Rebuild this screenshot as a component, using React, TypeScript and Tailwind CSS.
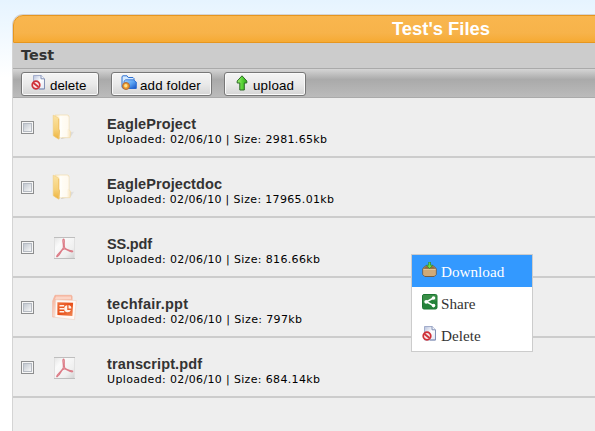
import React from "react";

type Kind = "folder" | "pdf" | "ppt";
type FileEntry = { name: string; size: string; kind: Kind; nameWidth: string; metaWidth: string };

const files: FileEntry[] = [
  { name: "EagleProject", size: "2981.65kb", kind: "folder", nameWidth: "89", metaWidth: "220" },
  { name: "EagleProjectdoc", size: "17965.01kb", kind: "folder", nameWidth: "115", metaWidth: "227" },
  { name: "SS.pdf", size: "816.66kb", kind: "pdf", nameWidth: "45", metaWidth: "213" },
  { name: "techfair.ppt", size: "797kb", kind: "ppt", nameWidth: "81", metaWidth: "195" },
  { name: "transcript.pdf", size: "684.14kb", kind: "pdf", nameWidth: "95", metaWidth: "213" },
];

function DeleteIcon() {
  return (
    <svg width="16" height="16" viewBox="0 0 16 16" className="shrink-0">
      <defs>
        <linearGradient id="page" x1="0" y1="0" x2="1" y2="1">
          <stop offset="0" stopColor="#b4bfdc" />
          <stop offset=".5" stopColor="#fff" />
          <stop offset="1" stopColor="#dfe4f2" />
        </linearGradient>
      </defs>
      <path d="M2.5.5h7.7l3.3 3.3v10.2h-11z" fill="url(#page)" stroke="#a3adcb" />
      <path d="M10 .5v3.3h3.5" fill="#f2f4fb" stroke="#8290b5" />
      <path d="M13.5 4v10H8" fill="none" stroke="#8290b5" />
      <circle cx="5" cy="10" r="3.8" fill="#f8e6e8" stroke="#cf3038" strokeWidth="1.7" />
      <path d="M2.5 8l5 4" stroke="#cf3038" strokeWidth="1.9" />
    </svg>
  );
}

function AddFolderIcon() {
  return (
    <svg width="16" height="16" viewBox="0 0 16 16" className="shrink-0">
      <defs>
        <linearGradient id="blueFolder" x1="0" y1="0" x2="1" y2="1">
          <stop offset="0" stopColor="#a8d6ff" />
          <stop offset=".5" stopColor="#5aa4f4" />
          <stop offset="1" stopColor="#1452c4" />
        </linearGradient>
      </defs>
      <path d="M1 12V1.5L2 .8h4l1.2 1.7H12l1 1V6l2 1v6.5H2z" fill="#d5eaff" stroke="#2c6fd2" />
      <path d="M3 13V6.2L4.7 4.8h7.7L15.2 7v6.5z" fill="url(#blueFolder)" stroke="#2869d0" strokeWidth=".8" />
      <circle cx="5" cy="11" r="3.5" fill="#f09a2c" stroke="#ad6c3c" />
      <circle cx="4.8" cy="10.8" r="1.7" fill="#ffe28d" />
    </svg>
  );
}

function UploadIcon() {
  return (
    <svg width="16" height="16" viewBox="0 0 16 16" className="shrink-0">
      <defs>
        <linearGradient id="greenArrow">
          <stop offset="0" stopColor="#a3ec75" />
          <stop offset=".5" stopColor="#5bd438" />
          <stop offset="1" stopColor="#35ad20" />
        </linearGradient>
      </defs>
      <path d="M8 .8L12.8 6v2h-2.5v7H5.8V8H3.2V6z" fill="url(#greenArrow)" stroke="#2c6b26" strokeLinejoin="round" />
    </svg>
  );
}

function DownloadIcon() {
  return (
    <svg width="16" height="16" viewBox="0 0 16 16" className="shrink-0">
      <path d="M.8 6.5L3.5 4h8L14.2 6.5v6l-2 2H2.8l-2-2z" fill="#c89d66" stroke="#70573c" strokeWidth=".9" />
      <path d="M1.5 6.8l2.4-2.4h7.2l2.4 2.4z" fill="#8d6b43" />
      <path d="M1.3 7h12.4v5.3l-1.7 1.8H3l-1.7-1.8z" fill="#d0aa78" />
      <path d="M1.5 7.5h12" stroke="#e6caa0" strokeWidth=".8" />
      <path d="M6.7 0h1.8v3.2h2.2L7.6 6.6 4.5 3.2h2.2z" fill="#6fe04b" stroke="#2f8a24" strokeWidth=".7" />
    </svg>
  );
}

function ShareIcon() {
  return (
    <svg width="16" height="16" viewBox="0 0 16 16" className="shrink-0">
      <rect x=".5" y=".5" width="14.5" height="14.5" rx="1.5" fill="#24823a" stroke="#1c7632" />
      <path d="M1 1h13.5v6Q9 5 1 9z" fill="#4b9b52" opacity=".55" />
      <path d="M11.5 4L4.5 7.8l7 3.8" fill="none" stroke="#fff" strokeWidth="1.6" />
      <circle cx="11.5" cy="4" r="1.8" fill="#fff" />
      <circle cx="4.2" cy="7.8" r="1.9" fill="#fff" />
      <circle cx="11.5" cy="11.6" r="1.8" fill="#fff" />
    </svg>
  );
}

function FileIcon({ kind }: { kind: Kind }) {
  if (kind === "folder") {
    return (
      <svg width="26" height="28" viewBox="0 0 26 28">
        <defs>
          <linearGradient id="folderCover" x1="0" y1="0" x2="0" y2="1">
            <stop stopColor="#fbe3a4" />
            <stop offset=".6" stopColor="#f6d077" />
            <stop offset="1" stopColor="#edb23c" />
          </linearGradient>
          <linearGradient id="folderInner">
            <stop stopColor="#fbe6b6" />
            <stop offset=".35" stopColor="#fffdf6" />
            <stop offset=".75" stopColor="#fffaf0" />
            <stop offset="1" stopColor="#f8e3b8" />
          </linearGradient>
          <linearGradient id="folderShadow">
            <stop stopColor="#8e8272" stopOpacity=".75" />
            <stop offset="1" stopColor="#aaa" stopOpacity=".1" />
          </linearGradient>
        </defs>
        <path d="M14 19l8.5-1.5-4.5 6-9 1z" fill="url(#folderShadow)" />
        <path d="M3 1h12.5l1.5 1v13.5l1.6 2-.5 6.2H7L3 23z" fill="url(#folderInner)" stroke="#f2dcae" strokeWidth=".7" />
        <path d="M1.2 1.2L6.7 4v11l.8 2-.8 8.3-5.5-3.6z" fill="url(#folderCover)" stroke="#f0cd80" strokeWidth=".6" />
        <path d="M9 3v20.5M16 2.5v13" stroke="#fff" strokeWidth=".9" />
        <path d="M6.7 5v10l.8 2-.6 8" fill="none" stroke="#edbd5d" strokeWidth=".8" />
      </svg>
    );
  }
  if (kind === "pdf") {
    return (
      <svg width="26" height="28" viewBox="0 0 26 28">
        <defs>
          <linearGradient id="pdfPage" x1="0" y1="0" x2="1" y2="1">
            <stop stopColor="#e3e3e3" />
            <stop offset=".3" stopColor="#fafafa" />
            <stop offset=".7" stopColor="#efefef" />
            <stop offset="1" stopColor="#cfcfcf" />
          </linearGradient>
        </defs>
        <path d="M2 3h21v22H2z" fill="url(#pdfPage)" />
        <path d="M2 3.5h21M2 24.5h21" stroke="#bebebe" />
        <path d="M2.5 4v20M22.5 4v20" stroke="#e1e1e1" />
        <path d="M4.7 22.2c1-2 3.8-4 6.5-8.2.7-3-.9-6.7-.2-8.5.7-1 1.5-.2 1.3 2.5-.1 2.2-.2 4 .3 5.5 1.6 2 4.3 2.6 7.2 3.2 1.6.5 1 1.5-.6 1.1-2.7-.7-4-2.3-6.3-2.9-1.6-.1-2.3.2-3.2 1.9-1.4 2.5-2.5 4.9-4.3 5.8-.7.2-1 .1-.7-.4z" fill="#f3c9ce" stroke="#dc7c87" strokeWidth="1.1" />
      </svg>
    );
  }
  return (
    <svg width="26" height="28" viewBox="0 0 26 28">
      <defs>
        <linearGradient id="slide" x1="0" y1="0" x2="1" y2="1">
          <stop stopColor="#ee7544" />
          <stop offset=".5" stopColor="#e84e17" />
          <stop offset="1" stopColor="#f08a58" />
        </linearGradient>
        <linearGradient id="slideBack" x1="0" y1="0" x2="0" y2="1">
          <stop stopColor="#f6b199" />
          <stop offset="1" stopColor="#fadfd4" />
        </linearGradient>
      </defs>
      <path d="M3 1.3h16.5l.6 1.2V22L.7 23 .7 7z" fill="url(#slideBack)" stroke="#f3b29b" strokeWidth=".7" />
      <path d="M4 2.5h15v2.5H3z" fill="#fbd5c7" />
      <path d="M3.8 5.8l20.5.7-1.8 19.2-19.7-2.4z" fill="#fff8f4" stroke="#ecd6ca" strokeWidth=".7" />
      <path d="M5.4 8.2l15.7.5-.7 13.3-15-1z" fill="url(#slide)" />
      <path d="M7.5 11.7h4.7M7.5 14.7h4.7M7.5 17.7h4.7" stroke="#fff2e9" strokeWidth="1.6" />
      <path d="M15.3 11.3a3.5 3.5 0 103.6 4.7h-3.6z" fill="#fff2e9" />
      <path d="M16.5 11a3.3 3.3 0 012.8 3.6h-2.8z" fill="#fff2e9" />
    </svg>
  );
}

function TextLine({ children, width, className }: { children: string; width: string; className: string }) {
  return (
    <svg width="250" height="15" className="block overflow-visible">
      <text x="0" y="12" textLength={width} lengthAdjust="spacing" className={className}>{children}</text>
    </svg>
  );
}

function ToolbarButton({ children, icon, className }: { children: string; icon: React.ReactNode; className: string }) {
  return (
    <button className={`flex h-6 items-center rounded-[3px] border border-[#777] bg-linear-to-b from-[#f4f4f4] via-[#eaeaea] to-[#d5d5d5] pl-[9px] font-['Liberation_Sans',sans-serif] text-[13.33px] text-black shadow-[inset_0_0_0_1px_#fafafa] ${className}`}>
      <span className="mb-[3px]">{icon}</span>
      <span className="ml-[3px] mt-[3px] whitespace-nowrap leading-4">{children}</span>
    </button>
  );
}

function FileRow({ file }: { file: FileEntry }) {
  return (
    <div className="flex h-[60px] border-b-2 border-[#ccc]">
      <div className="ml-2 mt-[23px] flex size-[13px] shrink-0 border border-[#8d8e8f] bg-[#f6f6f6] p-px">
        <div className="size-full border border-[#b5bac2] bg-linear-to-br from-[#c2c8d0] to-[#f6f6f6]" />
      </div>
      <div className="ml-[18px] mt-4 w-[55px] shrink-0"><FileIcon kind={file.kind} /></div>
      <div className="mt-[19px]">
        <TextLine width={file.nameWidth} className="fill-[#333] font-['Liberation_Sans',sans-serif] text-[14.5px] font-bold">{file.name}</TextLine>
        <div className="-mt-[1px]">
          <TextLine width={file.metaWidth} className="fill-black font-['DejaVu_Sans',sans-serif] text-[11px]">{`Uploaded: 02/06/10 | Size: ${file.size}`}</TextLine>
        </div>
      </div>
    </div>
  );
}

function MenuItem({ icon, label, active = false }: { icon: React.ReactNode; label: string; active?: boolean }) {
  return (
    <div className={`flex h-8 pl-[10px] ${active ? "bg-[#3399ff] text-white" : "text-[#333]"}`}>
      <div className="mt-[7px]">{icon}</div>
      <span className="ml-[3px] mt-[6px] text-[15.2px] leading-[22px]">{label}</span>
    </div>
  );
}

export default function App() {
  return (
    <main className="relative h-[431px] w-full overflow-hidden bg-linear-to-b from-[#e6f4ff] via-white via-[18%] to-white pl-3 pt-[14px]">
      <section className="h-[440px] w-[858px] rounded-tl-[11px] border-l border-t border-[#d4d4d4] bg-[#eee]">
        <header className="flex h-7 items-center justify-center rounded-tl-[10px] border border-[#e6961f] bg-linear-to-b from-[#f9b64e] via-[#f7b34a] via-[65%] to-[#f6aa32] pb-[1px] font-['Liberation_Sans',sans-serif] text-[18.4px] font-bold text-white">
          <span className="-ml-px">Test's Files</span>
        </header>
        <div className="h-[26px] border-b border-[#aaa] bg-[#ccc] pl-2 pt-px font-['DejaVu_Sans',sans-serif] text-[14.4px] font-bold leading-[22px] text-[#333]">Test</div>
        <div className="flex h-[29px] gap-3 border-b border-[#aaa] bg-linear-to-b from-[#d5d5d5] via-[#aaa] via-[38%] to-[#bbb] pl-2 pt-[3px]">
          <ToolbarButton icon={<DeleteIcon />} className="w-[78px]">delete</ToolbarButton>
          <ToolbarButton icon={<AddFolderIcon />} className="w-[101px] tracking-[0.16px]">add folder</ToolbarButton>
          <ToolbarButton icon={<UploadIcon />} className="w-[82px] tracking-[0.2px]">upload</ToolbarButton>
        </div>
        {files.map(file => <FileRow key={file.name} file={file} />)}
      </section>
      <aside className="absolute left-[411px] top-[254px] h-[98px] w-[122px] border border-[#ccc] bg-white font-['Liberation_Serif',serif]">
        <MenuItem active icon={<DownloadIcon />} label="Download" />
        <MenuItem icon={<ShareIcon />} label="Share" />
        <MenuItem icon={<DeleteIcon />} label="Delete" />
      </aside>
    </main>
  );
}
